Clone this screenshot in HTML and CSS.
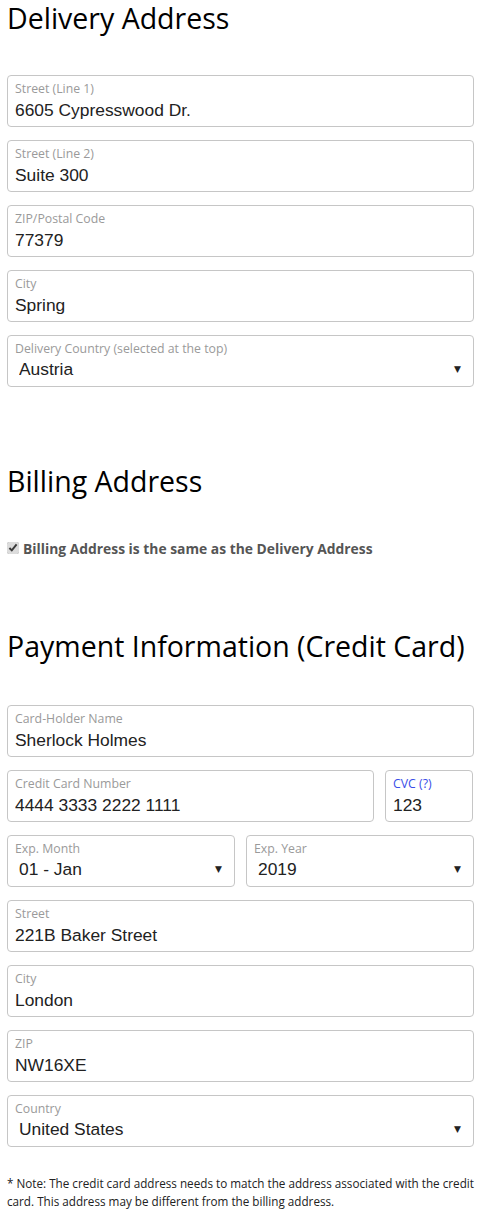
FILE: index.html
```html
<!DOCTYPE html>
<html lang="en">
<head>
    <meta charset="UTF-8">
    <title>Checkout</title>
    <meta name="viewport" content="width=device-width, initial-scale=1">
    <link rel="stylesheet" href="styles.css">
</head>
<body>
<div id="container">
    <h2 class="section-title first">Delivery Address</h2>

    <div class="field">
        <label for="street1">Street (Line 1)</label>
        <input type="text" id="street1" value="6605 Cypresswood Dr.">
    </div>
    <div class="field">
        <label for="street2">Street (Line 2)</label>
        <input type="text" id="street2" value="Suite 300">
    </div>
    <div class="field">
        <label for="zip">ZIP/Postal Code</label>
        <input type="text" id="zip" value="77379">
    </div>
    <div class="field">
        <label for="city">City</label>
        <input type="text" id="city" value="Spring">
    </div>
    <div class="field select-field">
        <label for="country">Delivery Country (selected at the top)</label>
        <select id="country"><option>Austria</option></select>
        <span class="arrow">&#9660;</span>
    </div>

    <h2 class="section-title billing">Billing Address</h2>

    <div class="same-as">
        <input type="checkbox" id="sameAddress" checked>
        <label for="sameAddress">Billing Address is the same as the Delivery Address</label>
    </div>

    <h2 class="section-title payment">Payment Information (Credit Card)</h2>

    <div class="field">
        <label for="holder">Card-Holder Name</label>
        <input type="text" id="holder" value="Sherlock Holmes">
    </div>
    <div class="row">
        <div class="field grow">
            <label for="ccnum">Credit Card Number</label>
            <input type="text" id="ccnum" value="4444 3333 2222 1111">
        </div>
        <div class="field cvc">
            <label for="cvc" class="link">CVC (?)</label>
            <input type="text" id="cvc" value="123">
        </div>
    </div>
    <div class="row">
        <div class="field select-field grow">
            <label for="month">Exp. Month</label>
            <select id="month"><option>01 - Jan</option></select>
            <span class="arrow">&#9660;</span>
        </div>
        <div class="field select-field grow">
            <label for="year">Exp. Year</label>
            <select id="year"><option>2019</option></select>
            <span class="arrow">&#9660;</span>
        </div>
    </div>
    <div class="field">
        <label for="ccstreet">Street</label>
        <input type="text" id="ccstreet" value="221B Baker Street">
    </div>
    <div class="field">
        <label for="cccity">City</label>
        <input type="text" id="cccity" value="London">
    </div>
    <div class="field">
        <label for="cczip">ZIP</label>
        <input type="text" id="cczip" value="NW16XE">
    </div>
    <div class="field select-field">
        <label for="cccountry">Country</label>
        <select id="cccountry"><option>United States</option></select>
        <span class="arrow">&#9660;</span>
    </div>

    <p class="note">* Note: The credit card address needs to match the address associated with the credit card. This address may be different from the billing address.</p>
</div>
</body>
</html>
```

FILE: styles.css
```css
body, html {
    margin: 0;
    padding: 0;
    font: 12px 'Open Sans', 'Noto Sans', sans-serif;
    background: #fff;
}

#container {
    padding: 0 9px 0 7px;
}

.section-title {
    font-family: 'Open Sans', sans-serif;
    font-weight: normal;
    font-size: 28.5px;
    line-height: 36px;
    color: #000;
    margin: 0 0 39px;
}

/* sibling margins collapse, so these include the field's 13px */
.section-title.billing {
    margin-top: 76px;
}

.section-title.payment {
    margin-top: 70px;
    margin-bottom: 41px;
}

.field {
    position: relative;
    box-sizing: border-box;
    height: 52px;
    border: 1px solid #c6c6c6;
    border-radius: 4px;
    padding: 5px 7px 0;
    margin-bottom: 13px;
    display: flex;
    flex-direction: column;
}

.field label {
    font-size: 12.3px;
    line-height: 16px;
    color: #9a9a9a;
}

.field label.link {
    color: #3a4ee8;
}

.field input, .field select {
    font: 17.4px 'Liberation Sans', Arial, sans-serif;
    color: #222;
    border: 0;
    padding: 0;
    margin: 1px 0 0;
    height: 24px;
    outline: none;
    background: transparent;
    width: 100%;
}

.field select {
    -webkit-appearance: none;
    appearance: none;
    padding-left: 4px;
    margin-top: 0;
}

.arrow {
    position: absolute;
    right: 12px;
    top: 28px;
    font-size: 9px;
    color: #222;
    font-family: 'DejaVu Sans', sans-serif;
}

.row {
    display: flex;
    gap: 11px;
}

.grow {
    flex: 1;
}

.cvc {
    width: 88px;
    margin-right: 1px;
}

.same-as {
    display: flex;
    align-items: center;
    gap: 4px;
    height: 20px;
}

.same-as input {
    margin: 0;
    width: 12px;
    height: 12px;
    accent-color: #dcdcdc;
}

.same-as label {
    font: bold 13.85px 'Open Sans', sans-serif;
    color: #555;
}

.note {
    margin: 27px 0 0;
    font-size: 11.7px;
    line-height: 18px;
    color: #222;
}
```
